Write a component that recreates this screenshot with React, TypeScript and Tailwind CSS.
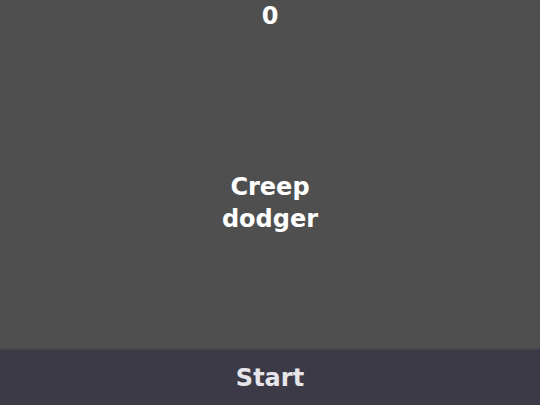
import React from "react";

export default function App() {
  return (
    <div
      className="w-[540px] h-[405px] bg-[#4f4f4f] flex flex-col text-white overflow-hidden"
      style={{ fontFamily: '"DejaVu Sans", sans-serif' }}
    >
      <div className="flex-1 flex flex-col items-center">
        <div className="text-[24px] font-bold leading-none mt-[4px]">0</div>
        <div className="flex-1 flex items-center justify-center">
          <h1 className="text-[24px] font-bold leading-[32px] text-center mt-[30px]">
            Creep
            <br />
            dodger
          </h1>
        </div>
      </div>
      <button className="h-[57px] w-full bg-[#3c3a46] border-t-2 border-[#46444f] text-[#e6e6ea] text-[24px] font-bold">
        Start
      </button>
    </div>
  );
}
